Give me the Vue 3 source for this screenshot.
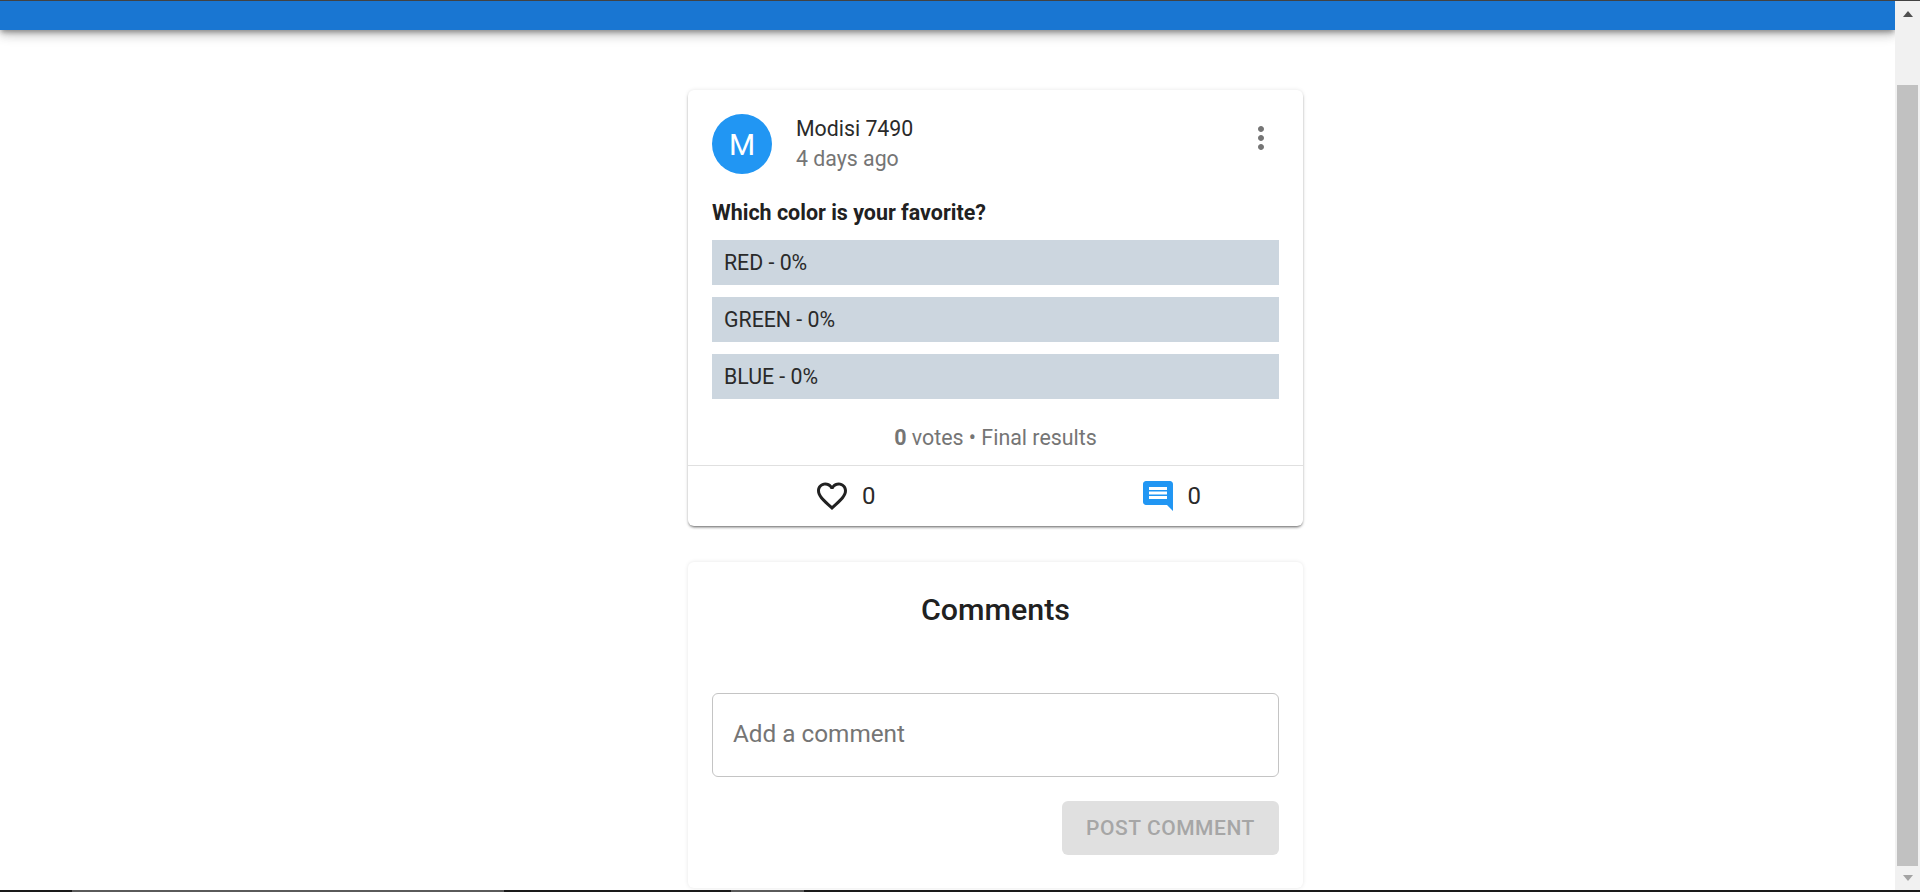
<script setup>
const options = ['RED - 0%', 'GREEN - 0%', 'BLUE - 0%']
</script>

<template>
  <div class="screen">
    <div class="top-line"></div>
    <div class="window">
      <div class="page">
        <header class="appbar"></header>
        <main class="content">
          <section class="card poll">
            <div class="poll-body">
              <div class="head">
                <div class="avatar">M</div>
                <div class="who">
                  <div class="name">Modisi 7490</div>
                  <div class="when">4 days ago</div>
                </div>
                <svg class="more" viewBox="0 0 24 24" width="36" height="36">
                  <path fill="#757575" d="M12 8c1.1 0 2-.9 2-2s-.9-2-2-2-2 .9-2 2 .9 2 2 2zm0 2c-1.1 0-2 .9-2 2s.9 2 2 2 2-.9 2-2-.9-2-2-2zm0 6c-1.1 0-2 .9-2 2s.9 2 2 2 2-.9 2-2-.9-2-2-2z" />
                </svg>
              </div>
              <div class="question">Which color is your favorite?</div>
              <div class="options">
                <div v-for="o in options" :key="o" class="option">{{ o }}</div>
              </div>
              <div class="votes"><b>0</b> votes • Final results</div>
            </div>
            <div class="actions">
              <div class="action">
                <svg viewBox="0 0 24 24" width="36" height="36">
                  <path fill="#212121" d="M16.5 3c-1.74 0-3.41.81-4.5 2.09C10.91 3.81 9.24 3 7.5 3 4.42 3 2 5.42 2 8.5c0 3.78 3.4 6.86 8.55 11.54L12 21.35l1.45-1.32C18.6 15.36 22 12.28 22 8.5 22 5.42 19.58 3 16.5 3zm-4.4 15.55l-.1.1-.1-.1C7.14 14.24 4 11.39 4 8.5 4 6.5 5.5 5 7.5 5c1.54 0 3.04.99 3.57 2.36h1.87C13.46 5.99 14.96 5 16.5 5c2 0 3.5 1.5 3.5 3.5 0 2.89-3.14 5.74-7.9 10.05z" />
                </svg>
                <span>0</span>
              </div>
              <div class="action">
                <svg viewBox="0 0 24 24" width="36" height="36">
                  <path fill="#2196f3" d="M21.99 4c0-1.1-.89-2-1.99-2H4c-1.1 0-2 .9-2 2v12c0 1.1.9 2 2 2h14l4 4-.01-18zM18 14H6v-2h12v2zm0-3H6V9h12v2zm0-3H6V6h12v2z" />
                </svg>
                <span>0</span>
              </div>
            </div>
          </section>

          <section class="card comments">
            <h2>Comments</h2>
            <div class="field">Add a comment</div>
            <div class="btn-row">
              <button class="post" disabled>POST COMMENT</button>
            </div>
          </section>
        </main>
      </div>
      <aside class="scrollbar">
        <div class="arrow up"></div>
        <div class="track"><div class="thumb"></div></div>
        <div class="arrow down"></div>
      </aside>
    </div>
    <div class="taskbar">
      <i class="seg a"></i><i class="seg b"></i><i class="seg c"></i><i class="seg d"></i>
    </div>
  </div>
</template>

<style>
html, body { margin: 0; overflow: hidden; }
</style>

<style scoped>
.screen {
  width: 1920px;
  height: 892px;
  display: flex;
  flex-direction: column;
  overflow: hidden;
  font-family: Roboto, "Liberation Sans", sans-serif;
  color: #212121;
  background: #fff;
}
.top-line { height: 1px; background: #424242; flex: none; }
.window { flex: 1; display: flex; min-height: 0; }
.page { flex: 1; min-width: 0; overflow: hidden; }
.appbar {
  height: 29px;
  background: #1976d2;
  box-shadow: 0 3px 5px -1px rgba(0,0,0,.35), 0 6px 10px 0 rgba(0,0,0,.14), 0 1px 18px 0 rgba(0,0,0,.12);
}
.content {
  width: 615px;
  margin-left: 688px;
  padding-top: 60px;
  display: flex;
  flex-direction: column;
  gap: 36px;
}
.card {
  background: #fff;
  border-radius: 6px;
  box-shadow: 0 0 4px rgba(0,0,0,.1);
}
.poll {
  height: 436px;
  display: flex;
  flex-direction: column;
  box-shadow: 0 0 4px rgba(0,0,0,.1), 0 2px 3px -1px rgba(0,0,0,.6);
}
.poll-body { padding: 24px 24px 0; flex: 1; }
.head { display: flex; height: 60px; }
.avatar {
  width: 60px;
  height: 60px;
  border-radius: 50%;
  background: #2196f3;
  color: #fff;
  font-size: 30px;
  display: flex;
  align-items: center;
  justify-content: center;
}
.who { margin-left: 24px; flex: 1; font-size: 21.3px; line-height: 30px; }
.name { color: #2a2a2a; }
.when { color: #757575; }
.more { margin-top: 6px; flex: none; }
.question { margin-top: 26px; font-size: 21.45px; font-weight: 700; line-height: 26px; color: #212121; }
.options { margin-top: 14px; display: flex; flex-direction: column; gap: 12px; }
.option {
  height: 45px;
  line-height: 45px;
  padding-left: 12px;
  background: #ccd6df;
  font-size: 21.3px;
  color: #2a2a2a;
}
.votes { margin-top: 25px; text-align: center; font-size: 21.4px; line-height: 28px; color: #757575; }
.actions {
  height: 60px;
  border-top: 1px solid #e0e0e0;
  display: flex;
  padding-left: 126px;
  gap: 264px;
}
.action {
  display: flex;
  align-items: center;
  gap: 12px;
  font-size: 24px;
  color: #2a2a2a;
}
.comments { height: 326px; padding: 0 24px; box-sizing: border-box; }
h2 {
  margin: 0;
  padding-top: 30px;
  text-align: center;
  font-size: 30.4px;
  font-weight: 500;
  line-height: 36px;
}
.field {
  margin-top: 65px;
  height: 84px;
  box-sizing: border-box;
  border: 1px solid #c4c4c4;
  border-radius: 6px;
  padding: 26px 20px;
  font-size: 24.3px;
  line-height: 28px;
  color: #757575;
}
.btn-row { display: flex; justify-content: flex-end; margin-top: 24px; }
.post {
  width: 217px;
  height: 54px;
  border: 0;
  border-radius: 6px;
  background: #e0e0e0;
  color: #a6a6a6;
  font: 500 21px Roboto, "Liberation Sans", sans-serif;
  letter-spacing: .55px;
}
.scrollbar {
  width: 25px;
  flex: none;
  background: #f1f1f1;
  display: flex;
  flex-direction: column;
  align-items: center;
}
.arrow { width: 0; height: 0; border-left: 5.5px solid transparent; border-right: 5.5px solid transparent; flex: none; }
.up { border-bottom: 6px solid #505050; margin: 10px 0 68px; }
.down { border-top: 6px solid #a3a3a3; margin: 9px 0 9px; }
.track { flex: 1; width: 21px; }
.thumb { height: 100%; background: #c1c1c1; }
.taskbar { height: 2px; flex: none; background: #1a1a1a; display: flex; }
.seg { display: block; height: 2px; }
.a { width: 72px; }
.b { width: 432px; background: #5a5a5a; }
.c { width: 227px; }
.d { width: 73px; background: #5a5a5a; }
</style>
